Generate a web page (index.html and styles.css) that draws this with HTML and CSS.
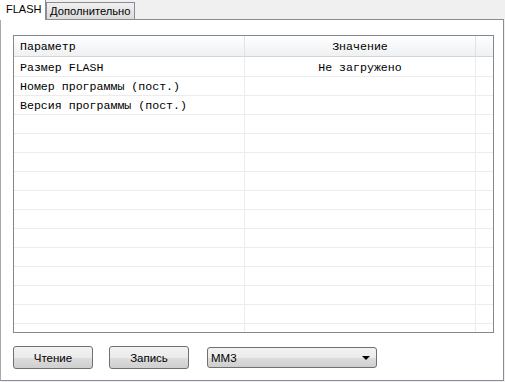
FILE: index.html
```html
<!DOCTYPE html>
<html lang="ru">
<head>
    <meta charset="UTF-8">
    <title>FLASH</title>
    <link rel="stylesheet" href="styles.css">
</head>
<body>

    <div class="tabs">
        <div class="tab active">FLASH</div>
        <div class="tab">Дополнительно</div>
    </div>

    <div class="panel">
        <div class="table">
            <div class="row head">
                <div class="cell name">Параметр</div>
                <div class="cell value">Значение</div>
                <div class="cell pad"></div>
            </div>
            <div class="body">
                <div class="row first"><div class="cell name">Размер FLASH</div><div class="cell value">Не загружено</div><div class="cell pad"></div></div>
                <div class="row"><div class="cell name">Номер программы (пост.)</div><div class="cell value"></div><div class="cell pad"></div></div>
                <div class="row"><div class="cell name">Версия программы (пост.)</div><div class="cell value"></div><div class="cell pad"></div></div>
                <div class="row"><div class="cell name"></div><div class="cell value"></div><div class="cell pad"></div></div>
                <div class="row"><div class="cell name"></div><div class="cell value"></div><div class="cell pad"></div></div>
                <div class="row"><div class="cell name"></div><div class="cell value"></div><div class="cell pad"></div></div>
                <div class="row"><div class="cell name"></div><div class="cell value"></div><div class="cell pad"></div></div>
                <div class="row"><div class="cell name"></div><div class="cell value"></div><div class="cell pad"></div></div>
                <div class="row"><div class="cell name"></div><div class="cell value"></div><div class="cell pad"></div></div>
                <div class="row"><div class="cell name"></div><div class="cell value"></div><div class="cell pad"></div></div>
                <div class="row"><div class="cell name"></div><div class="cell value"></div><div class="cell pad"></div></div>
                <div class="row"><div class="cell name"></div><div class="cell value"></div><div class="cell pad"></div></div>
                <div class="row"><div class="cell name"></div><div class="cell value"></div><div class="cell pad"></div></div>
                <div class="row"><div class="cell name"></div><div class="cell value"></div><div class="cell pad"></div></div>
                <div class="row"><div class="cell name"></div><div class="cell value"></div><div class="cell pad"></div></div>
                <div class="row"><div class="cell name"></div><div class="cell value"></div><div class="cell pad"></div></div>
            </div>
        </div>

        <div class="controls">
            <button class="btn">Чтение</button>
            <button class="btn">Запись</button>
            <div class="combo">
                <span>ММ3</span>
                <span class="arrow"></span>
            </div>
        </div>
    </div>

</body>
</html>
```

FILE: styles.css
```css
body {
    margin: 0;
    width: 505px;
    height: 382px;
    background-color: #f0f0f0;
    font-family: "Liberation Sans", Arial, sans-serif;
    font-size: 11.5px;
    color: #000;
    overflow: hidden;
}

/* Tabs */
.tabs {
    display: flex;
    align-items: flex-end;
    height: 19px;
    position: relative;
    z-index: 1;
}
.tab {
    height: 16px;
    line-height: 17px;
    padding: 0 3px;
    border: 1px solid #898c95;
    border-bottom: none;
    background: linear-gradient(#f0f0f0, #dcdcdc);
    font-size: 11.2px;
}
.tab.active {
    width: 46px;
    height: 20px;
    line-height: 19px;
    margin-bottom: -1px;
    padding: 0 0 0 6px;
    box-sizing: border-box;
    background: #fff;
    border-left: none;
    border-top: none;
    font-size: 11px;
}

/* Panel */
.panel {
    width: 504px;
    height: 362px;
    border: 1px solid #898c95;
    border-left-color: #a8a8a8;
    background-color: #fff;
    box-sizing: border-box;
    padding: 15px 10px 0 12px;
    display: flex;
    flex-direction: column;
}

/* Table */
.table {
    width: 481px;
    height: 298px;
    border: 1px solid #828790;
    box-sizing: border-box;
    display: flex;
    flex-direction: column;
    overflow: hidden;
    font-family: "Liberation Mono", "Courier New", monospace;
    font-size: 11.6px;
}
.row {
    display: flex;
    height: 18px;
    border-bottom: 1px solid #ececec;
    flex-shrink: 0;
}
.row.first {
    height: 19px;
}
.row.head {
    height: 20px;
    background: linear-gradient(#ffffff, #f7f8f9 50%, #eef0f2);
    border-bottom: 1px solid #d5d5d5;
}
.body {
    flex: 1;
    overflow: hidden;
}
.cell {
    line-height: 19px;
    white-space: nowrap;
}
.first .cell {
    line-height: 22px;
}
.head .cell {
    line-height: 21px;
}
.cell.name {
    width: 231px;
    padding-left: 6px;
    box-sizing: border-box;
    border-right: 1px solid #ececec;
}
.cell.value {
    width: 230px;
    text-align: center;
    border-right: 1px solid #ececec;
}
.head .cell.name,
.head .cell.value {
    border-right-color: #e0e2e4;
}
.cell.pad {
    flex: 1;
}

/* Buttons and combo */
.controls {
    display: flex;
    align-items: center;
    margin-top: 13px;
}
.btn {
    width: 80px;
    height: 23px;
    margin-right: 16px;
    border: 1px solid #707070;
    border-radius: 3px;
    background: linear-gradient(#f2f2f2, #ebebeb 50%, #dddddd 51%, #cfcfcf);
    font-family: "Liberation Sans", Arial, sans-serif;
    font-size: 11.5px;
    color: #000;
    padding: 0;
}
.combo {
    width: 170px;
    height: 21px;
    margin-left: 2px;
    border: 1px solid #707070;
    border-radius: 3px;
    box-sizing: border-box;
    background: linear-gradient(#f2f2f2, #ebebeb 50%, #dddddd 51%, #cfcfcf);
    display: flex;
    align-items: center;
    justify-content: space-between;
    padding: 0 6px 0 3px;
}
.arrow {
    width: 0;
    height: 0;
    border-left: 4px solid transparent;
    border-right: 4px solid transparent;
    border-top: 4px solid #000;
}
```
